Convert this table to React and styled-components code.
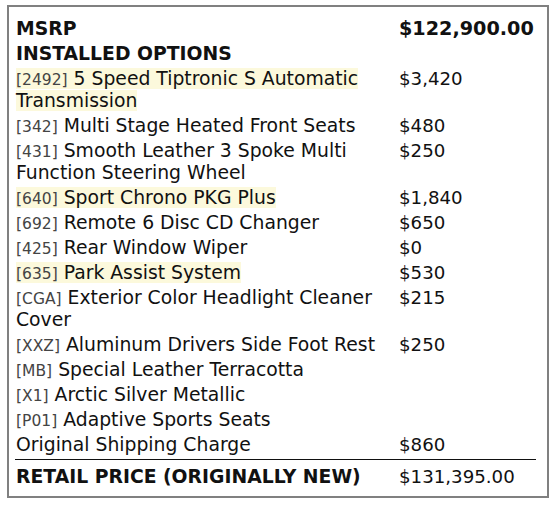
import React from "react";
import styled, { createGlobalStyle } from "styled-components";

const GlobalStyle = createGlobalStyle`
  html, body {
    margin: 0;
    padding: 0;
    background: #fff;
  }
  body {
    font-family: "DejaVu Sans", "Liberation Sans", sans-serif;
    color: #111;
  }
`;

const Page = styled.div`
  padding: 5px 0 0 7px;
`;

const Box = styled.div`
  width: 542px;
  box-sizing: border-box;
  border: 2px solid #808080;
  padding: 11px 10px 8px 6px;
`;

const Grid = styled.div`
  display: grid;
  grid-template-columns: 384px 1fr;
  row-gap: 3px;
  width: 521px;
  line-height: 22px;
`;

const Total = styled(Grid)`
  margin-top: 3px;
  padding-top: 6px;
  border-top: 1px solid #111;
`;

const Label = styled.div`
  padding-left: 1px;
  padding-right: 2px;
  font-size: 18.8px;
  font-weight: ${(p) => (p.$bold ? "bold" : "normal")};
`;

const Price = styled.div`
  font-size: ${(p) => (p.$bold ? "19.2px" : "18.2px")};
  font-weight: ${(p) => (p.$bold ? "bold" : "normal")};
`;

const Mark = styled.span`
  background: ${(p) => (p.$hl ? "#fcf9dc" : "transparent")};
`;

const Code = styled.span`
  font-size: 15.5px;
  line-height: 1;
  color: #444;
`;

const options = [
  { code: "2492", name: "5 Speed Tiptronic S Automatic Transmission", price: "$3,420", hl: true },
  { code: "342", name: "Multi Stage Heated Front Seats", price: "$480" },
  { code: "431", name: "Smooth Leather 3 Spoke Multi Function Steering Wheel", price: "$250" },
  { code: "640", name: "Sport Chrono PKG Plus", price: "$1,840", hl: true },
  { code: "692", name: "Remote 6 Disc CD Changer", price: "$650" },
  { code: "425", name: "Rear Window Wiper", price: "$0" },
  { code: "635", name: "Park Assist System", price: "$530", hl: true },
  { code: "CGA", name: "Exterior Color Headlight Cleaner Cover", price: "$215" },
  { code: "XXZ", name: "Aluminum Drivers Side Foot Rest", price: "$250" },
  { code: "MB", name: "Special Leather Terracotta", price: "" },
  { code: "X1", name: "Arctic Silver Metallic", price: "" },
  { code: "P01", name: "Adaptive Sports Seats", price: "" },
];

export default function App() {
  return (
    <Page>
      <GlobalStyle />
      <Box>
        <Grid>
          <Label $bold>MSRP</Label>
          <Price $bold>$122,900.00</Price>
          <Label $bold>INSTALLED OPTIONS</Label>
          <Price />
          {options.map((o) => (
            <React.Fragment key={o.code}>
              <Label>
                <Mark $hl={o.hl}>
                  <Code>[{o.code}]</Code> {o.name}
                </Mark>
              </Label>
              <Price>{o.price}</Price>
            </React.Fragment>
          ))}
          <Label>Original Shipping Charge</Label>
          <Price>$860</Price>
        </Grid>
        <Total>
          <Label $bold>RETAIL PRICE (ORIGINALLY NEW)</Label>
          <Price>$131,395.00</Price>
        </Total>
      </Box>
    </Page>
  );
}
